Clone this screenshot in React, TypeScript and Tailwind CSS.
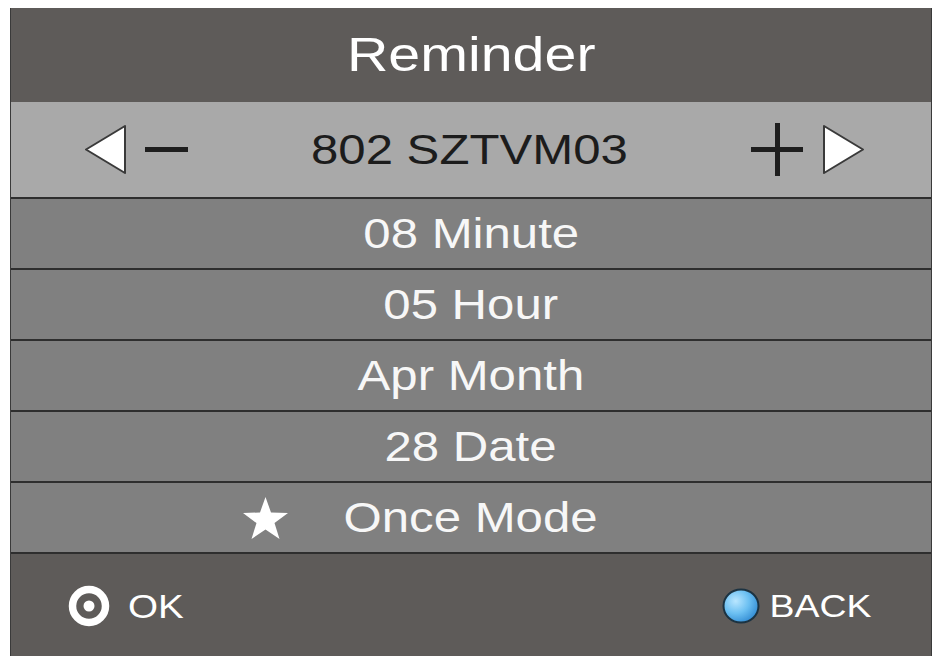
import React from "react";

const ROWS = ["08 Minute", "05 Hour", "Apr Month", "28 Date", "Once Mode"];

function Wide({ children, className = "" }: { children: React.ReactNode; className?: string }) {
  // the OSD font is a bit wider than Arial, stretch it horizontally
  return <span className={"inline-block scale-x-[1.17] whitespace-nowrap " + className}>{children}</span>;
}

function Triangle({ dir }: { dir: "left" | "right" }) {
  const pts = dir === "left" ? "40,1 1,24.5 40,48" : "1,1 40,24.5 1,48";
  return (
    <svg width="42" height="50" viewBox="0 0 42 50">
      <polygon points={pts} fill="#ffffff" stroke="#3a3a3a" strokeWidth="2" strokeLinejoin="round" />
    </svg>
  );
}

function Star() {
  return (
    <svg width="45" height="42" viewBox="0 0 45 42">
      <polygon
        points="22.5,0 28,15.5 45,16 31.5,26 36.5,42 22.5,32.5 8.5,42 13.5,26 0,16 17,15.5"
        fill="#ffffff"
      />
    </svg>
  );
}

function OkIcon() {
  return (
    <svg width="42" height="42" viewBox="0 0 42 42">
      <circle cx="21" cy="21" r="16.5" fill="none" stroke="#ffffff" strokeWidth="7.5" />
      <circle cx="21" cy="21" r="5.5" fill="#ffffff" />
    </svg>
  );
}

function BlueDot() {
  return (
    <svg width="38" height="36" viewBox="0 0 38 36">
      <defs>
        <radialGradient id="bd" cx="0.35" cy="0.35" r="0.75">
          <stop offset="0" stopColor="#b9e6ff" />
          <stop offset="0.5" stopColor="#6cc0f2" />
          <stop offset="1" stopColor="#2b86d0" />
        </radialGradient>
      </defs>
      <ellipse cx="19" cy="18" rx="17.5" ry="16.5" fill="url(#bd)" stroke="#1c3342" strokeWidth="2" />
    </svg>
  );
}

export default function App() {
  return (
    <div
      className="w-[937px] h-[656px] overflow-hidden bg-white pt-[8px] pl-[10px] pr-[5px]"
      style={{ fontFamily: '"Liberation Sans", Arial, sans-serif' }}
    >
      <div className="flex h-[648px] flex-col border-x border-[#3a3a3a]">
        {/* title */}
        <div className="flex h-[94px] items-center justify-center bg-[#5e5b59] pb-[2px]">
          <Wide className="text-[49px] leading-none text-white">Reminder</Wide>
        </div>

        {/* channel selector */}
        <div className="flex h-[95px] items-center justify-between bg-[#a9a9a9] pl-[74px] pr-[66px]">
          <div className="flex items-center gap-[18px]">
            <Triangle dir="left" />
            <div className="h-[5px] w-[43px] bg-[#1e1e1e]" />
          </div>
          <Wide className="text-[42px] leading-none text-[#1c1c1c]">802 SZTVM03</Wide>
          <div className="flex items-center gap-[20px]">
            <div className="relative h-[53px] w-[52px]">
              <div className="absolute left-0 top-[24px] h-[5px] w-[52px] bg-[#1e1e1e]" />
              <div className="absolute left-[24px] top-0 h-[53px] w-[5px] bg-[#1e1e1e]" />
            </div>
            <Triangle dir="right" />
          </div>
        </div>

        {/* settings rows */}
        {ROWS.map((row, i) => (
          <div
            key={row}
            className="flex h-[71px] items-center justify-center border-t-2 border-[#2e2e2e] bg-[#808080]"
          >
            {i === ROWS.length - 1 ? (
              <div className="flex items-center">
                <div className="mr-[74px] flex w-[45px] justify-center">
                  <Star />
                </div>
                <Wide className="text-[42px] leading-none text-[#f7f7f7]">{row}</Wide>
                <div className="w-[119px]" />
              </div>
            ) : (
              <Wide className="text-[42px] leading-none text-[#f7f7f7]">{row}</Wide>
            )}
          </div>
        ))}

        {/* footer */}
        <div className="flex flex-1 items-center justify-between border-t-2 border-[#2e2e2e] bg-[#5e5b59] pt-[2px] pl-[57px] pr-[67px]">
          <div className="flex items-center gap-[22px]">
            <OkIcon />
            <Wide className="text-[33px] leading-none text-white">OK</Wide>
          </div>
          <div className="flex items-center gap-[17px]">
            <BlueDot />
            <Wide className="text-[32px] leading-none text-white">BACK</Wide>
          </div>
        </div>
      </div>
    </div>
  );
}
